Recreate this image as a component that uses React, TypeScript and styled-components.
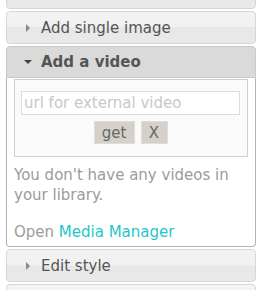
import React from "react";
import styled, { createGlobalStyle } from "styled-components";

const Global = createGlobalStyle`
  html, body { margin: 0; padding: 0; background: #fff; }
  body { font-family: "DejaVu Sans", Verdana, sans-serif; overflow: hidden; }
`;

const List = styled.div`
  display: flex;
  flex-direction: column;
  gap: 2px;
  padding: 0 7px 0 6px;
  margin-top: -24px;
`;

const Header = styled.div<{ $active?: boolean }>`
  display: flex;
  align-items: center;
  gap: 9px;
  height: ${(p) => (p.$active ? "30px" : "31px")};
  padding-left: 17px;
  border: 1px solid ${(p) => (p.$active ? "#c9c9c9" : "#d6d6d6")};
  border-radius: ${(p) => (p.$active ? "4px 4px 0 0" : "4px")};
  background: ${(p) =>
    p.$active
      ? "#dadada"
      : "linear-gradient(to bottom, #f3f3f3 0%, #f0f0f0 50%, #e7e7e7 50%, #e9e9e9 100%)"};
  color: #555;
  font-size: 15px;
  font-weight: ${(p) => (p.$active ? "bold" : "normal")};
  cursor: pointer;
`;

const Arrow = styled.svg`
  width: 8px;
  height: 8px;
  flex: none;
`;

const Panel = styled.div`
  margin-top: -2px;
  border: 1px solid #b3b3b3;
  border-top: none;
  border-radius: 0 0 4px 4px;
  padding: 1px 7px 4px 7px;
  color: #a09a95;
  font-size: 15px;
  line-height: 20px;
`;

const UrlBox = styled.div`
  border: 1px solid #cfcfcf;
  background: #fafafa;
  padding: 11px 7px 12px 6px;
  display: flex;
  flex-direction: column;
  align-items: center;
  gap: 6px;
  margin-bottom: 8px;
`;

const Input = styled.input`
  box-sizing: border-box;
  width: 100%;
  height: 24px;
  border: 1px solid #dcdcdc;
  background: #fff;
  font-family: inherit;
  font-size: 15px;
  padding: 0 2px;
  color: #555;
  outline: none;
  &::placeholder { color: #c8c8c8; }
`;

const Buttons = styled.div`
  display: flex;
  gap: 6px;
`;

const Btn = styled.button<{ $w: number }>`
  width: ${(p) => p.$w}px;
  height: 23px;
  border: 1px solid #e0ddd7;
  background: #d5d1ca;
  color: #666;
  font-family: inherit;
  font-size: 15px;
  padding: 0;
`;

const Para = styled.p`
  margin: 0 0 17px 0;
  &:last-child { margin-bottom: 0; }
`;

const Link = styled.a`
  color: #1cc8c8;
  text-decoration: none;
`;

const RightArrow = () => (
  <Arrow viewBox="0 0 8 8">
    <path d="M2 0 L6 4 L2 8 Z" fill="#8a8a8a" />
  </Arrow>
);
const DownArrow = () => (
  <Arrow viewBox="0 0 8 8">
    <path d="M0 2 L8 2 L4 6 Z" fill="#444" />
  </Arrow>
);

export default function App() {
  return (
    <>
      <Global />
      <List>
        <Header aria-hidden="true" />
        <Header>
          <RightArrow />
          <span>Add single image</span>
        </Header>
        <Header $active>
          <DownArrow />
          <span>Add a video</span>
        </Header>
        <Panel>
          <UrlBox>
            <Input placeholder="url for external video" />
            <Buttons>
              <Btn $w={41}>get</Btn>
              <Btn $w={27}>X</Btn>
            </Buttons>
          </UrlBox>
          <Para>You don't have any videos in your library.</Para>
          <Para>
            Open <Link href="#">Media Manager</Link>
          </Para>
        </Panel>
        <Header>
          <RightArrow />
          <span>Edit style</span>
        </Header>
        <Header aria-hidden="true" />
      </List>
    </>
  );
}
